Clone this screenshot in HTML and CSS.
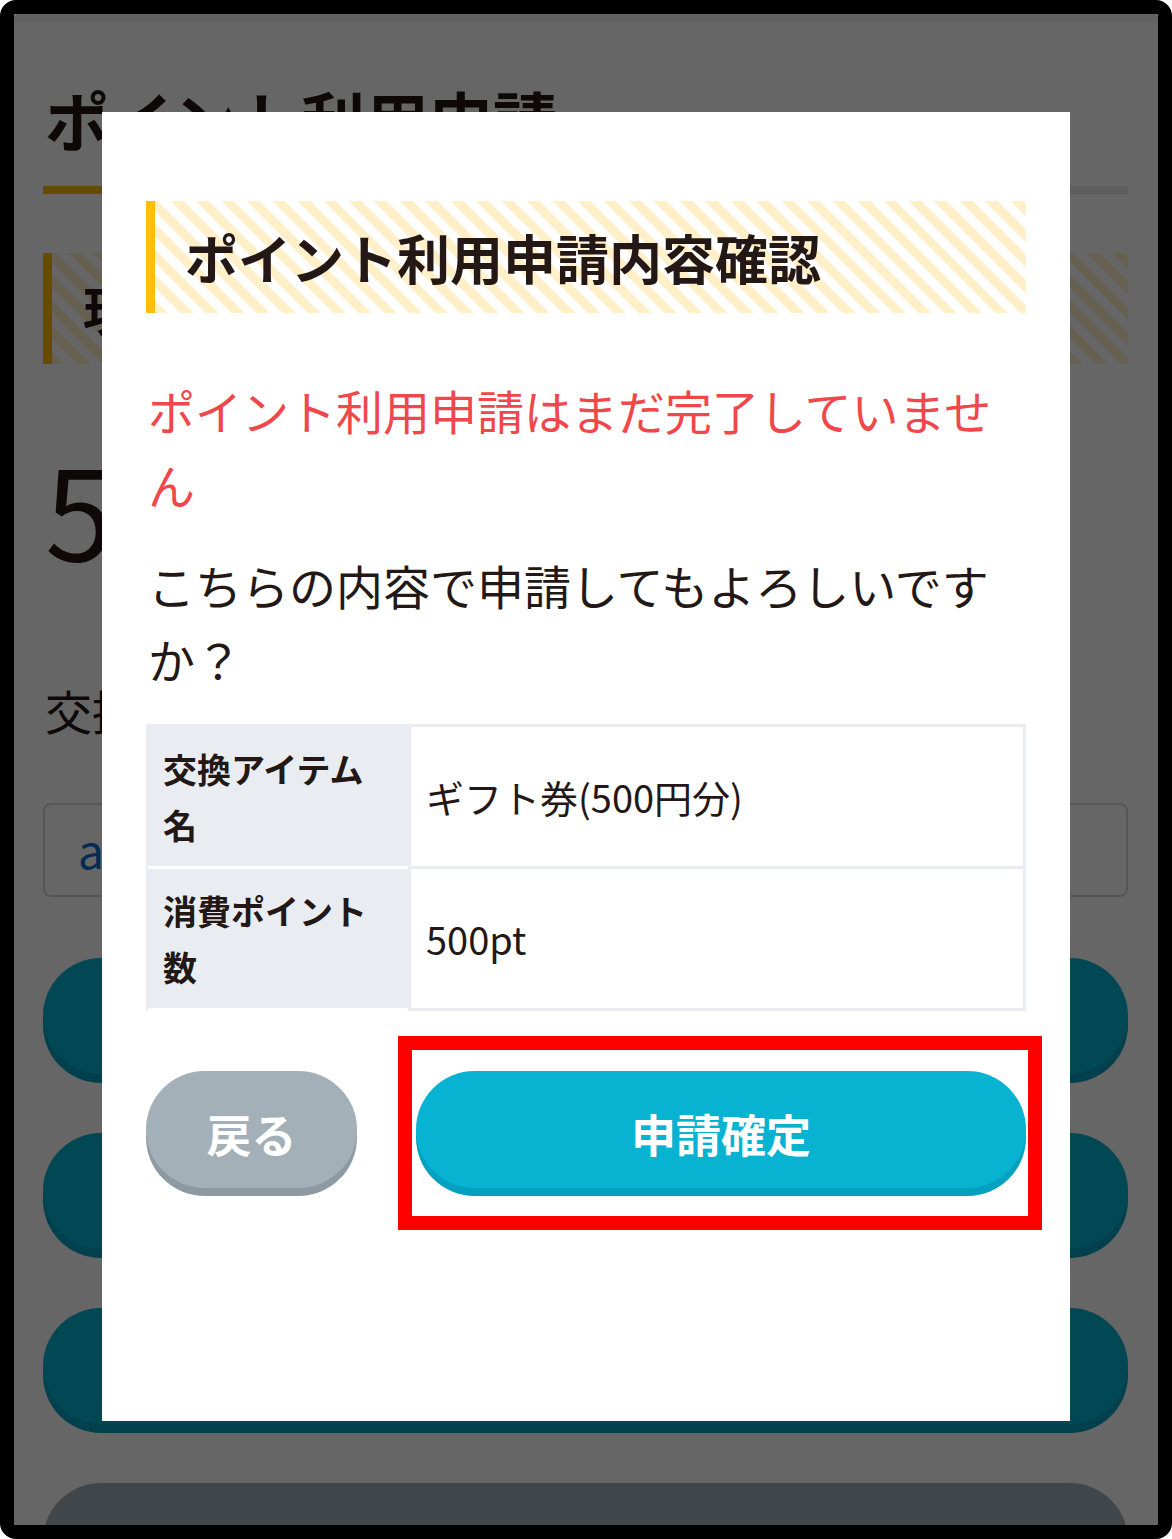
FILE: index.html
```html
<!DOCTYPE html>
<html lang="ja">
<head>
    <meta charset="UTF-8">
    <meta name="viewport" content="width=device-width, initial-scale=1.0">
    <link rel="stylesheet" href="styles.css">
    <title>ポイント利用申請</title>
</head>
<body>
    <div class="frame">

        <!-- pagina de fondo -->
        <div class="page">
            <div class="status"></div>
            <div class="page-body">
                <h1 class="page-title">ポイント利用申請</h1>
                <div class="title-line"><span></span></div>

                <h2 class="stripe-head">現在の保有ポイント</h2>
                <p class="balance">500</p>

                <p class="field-label">交換するアイテム</p>
                <div class="select">amazonギフト券</div>

                <div class="big-btn teal">次へ</div>
                <div class="big-btn teal">履歴を見る</div>
                <div class="big-btn teal">マイページ</div>
                <div class="big-btn gray"></div>
            </div>
        </div>

        <div class="overlay"></div>

        <!-- modal de confirmacion -->
        <div class="modal">
            <h2 class="modal-title">ポイント利用申請内容確認</h2>
            <p class="notice">ポイント利用申請はまだ完了していません</p>
            <p class="question">こちらの内容で申請してもよろしいですか？</p>

            <table class="detail">
                <tr>
                    <th>交換アイテム名</th>
                    <td>ギフト券(500円分)</td>
                </tr>
                <tr>
                    <th>消費ポイント数</th>
                    <td>500pt</td>
                </tr>
            </table>

            <div class="actions">
                <button class="btn btn-back">戻る</button>
                <div class="confirm-wrap">
                    <button class="btn btn-confirm">申請確定</button>
                    <div class="highlight"></div>
                </div>
            </div>
        </div>

    </div>
</body>
</html>
```

FILE: styles.css
```css
body {
    margin: 0;
    background-color: #ffffff;
    font-family: "Noto Sans CJK JP", "Noto Sans", sans-serif;
    color: #231815;
}

.frame {
    position: relative;
    width: 1172px;
    height: 1539px;
    box-sizing: border-box;
    border: 14px solid #000000;
    border-radius: 16px;
    overflow: hidden;
    background-color: #ffffff;
}

.page {
    height: 100%;
}

.status {
    height: 8px;
    background-color: #f2f2f2;
}

.page-body {
    padding: 0 30px 0 29px;
}

.page-title {
    margin: 58px 0 0 2px;
    font-size: 64px;
    line-height: 77px;
    font-weight: 700;
}

.title-line {
    margin-top: 29px;
    height: 8px;
    background-color: #e6e8ea;
}

.title-line span {
    display: block;
    width: 180px;
    height: 100%;
    background-color: #ffbe00;
}

.stripe-head {
    margin: 59px 0 0;
    height: 111px;
    line-height: 111px;
    padding-left: 31px;
    border-left: 9px solid #ffbe00;
    font-size: 52px;
    font-weight: 700;
    background: repeating-linear-gradient(45deg, #fff0c9 0, #fff0c9 9px, #ffffff 9px, #ffffff 18px);
}

.balance {
    margin: 81px 0 0 2px;
    font-size: 124px;
    line-height: 1;
}

.field-label {
    margin: 104px 0 0 2px;
    font-size: 47px;
    line-height: 74px;
}

.select {
    margin-top: 56px;
    height: 94px;
    box-sizing: border-box;
    border: 2px solid #d5d8dc;
    border-radius: 8px;
    padding-left: 33px;
    font-size: 46px;
    line-height: 88px;
    color: #0a6fd0;
}

.big-btn {
    margin-top: 59px;
    height: 116px;
    border-radius: 60px;
    text-align: center;
    line-height: 116px;
    font-size: 45px;
    font-weight: 700;
    color: #ffffff;
}

.select + .big-btn {
    margin-top: 61px;
}

.teal {
    background-color: #06b2d1;
    box-shadow: 0 9px 0 #03a0bf;
}

.gray {
    background-color: #a4b0b8;
    box-shadow: 0 9px 0 #8e9aa2;
}

.overlay {
    position: absolute;
    top: 0;
    left: 0;
    right: 0;
    bottom: 0;
    background-color: rgba(0, 0, 0, 0.6);
}

.modal {
    position: absolute;
    left: 88px;
    top: 98px;
    width: 968px;
    height: 1309px;
    box-sizing: border-box;
    padding: 89px 44px 0 44px;
    background-color: #ffffff;
}

.modal-title {
    margin: 0;
    height: 112px;
    line-height: 112px;
    padding-left: 30px;
    border-left: 9px solid #ffbe0a;
    font-size: 53px;
    font-weight: 700;
    background: repeating-linear-gradient(45deg, #fff0c9 0, #fff0c9 9px, #ffffff 9px, #ffffff 18px);
}

.notice {
    margin: 60px 0 0 2px;
    font-size: 47px;
    line-height: 74px;
    color: #f0474b;
}

.question {
    margin: 27px 0 0 2px;
    font-size: 47px;
    line-height: 74px;
}

.detail {
    margin-top: 28px;
    width: 100%;
    border-collapse: separate;
    border-spacing: 0;
    border-top: 3px solid #e9edf2;
    border-left: 2px solid #e9edf2;
}

.detail th {
    width: 260px;
    box-sizing: border-box;
    padding: 14px 15px 13px;
    background-color: #e9edf2;
    border-bottom: 3px solid #ffffff;
    text-align: left;
    font-size: 34px;
    line-height: 56px;
    font-weight: 700;
}

.detail td {
    padding: 0 15px;
    border-left: 3px solid #e9edf2;
    border-right: 3px solid #e9edf2;
    border-bottom: 3px solid #e9edf2;
    font-size: 38px;
    vertical-align: middle;
}

.actions {
    margin-top: 60px;
    display: flex;
    gap: 59px;
}

.btn {
    height: 117px;
    border: none;
    border-radius: 60px;
    padding: 8px 0 0;
    font-family: "Noto Sans CJK JP", sans-serif;
    font-size: 45px;
    font-weight: 700;
    color: #ffffff;
    cursor: pointer;
}

.btn-back {
    width: 211px;
    background-color: #a4b0b8;
    box-shadow: 0 8px 0 #8e9aa2;
}

.confirm-wrap {
    position: relative;
    flex: 1;
}

.btn-confirm {
    width: 100%;
    background-color: #07b3d1;
    box-shadow: 0 8px 0 #03a0bf;
}

.highlight {
    position: absolute;
    top: -35px;
    left: -18px;
    right: -16px;
    bottom: -42px;
    border: 14px solid #ff0000;
}
```
